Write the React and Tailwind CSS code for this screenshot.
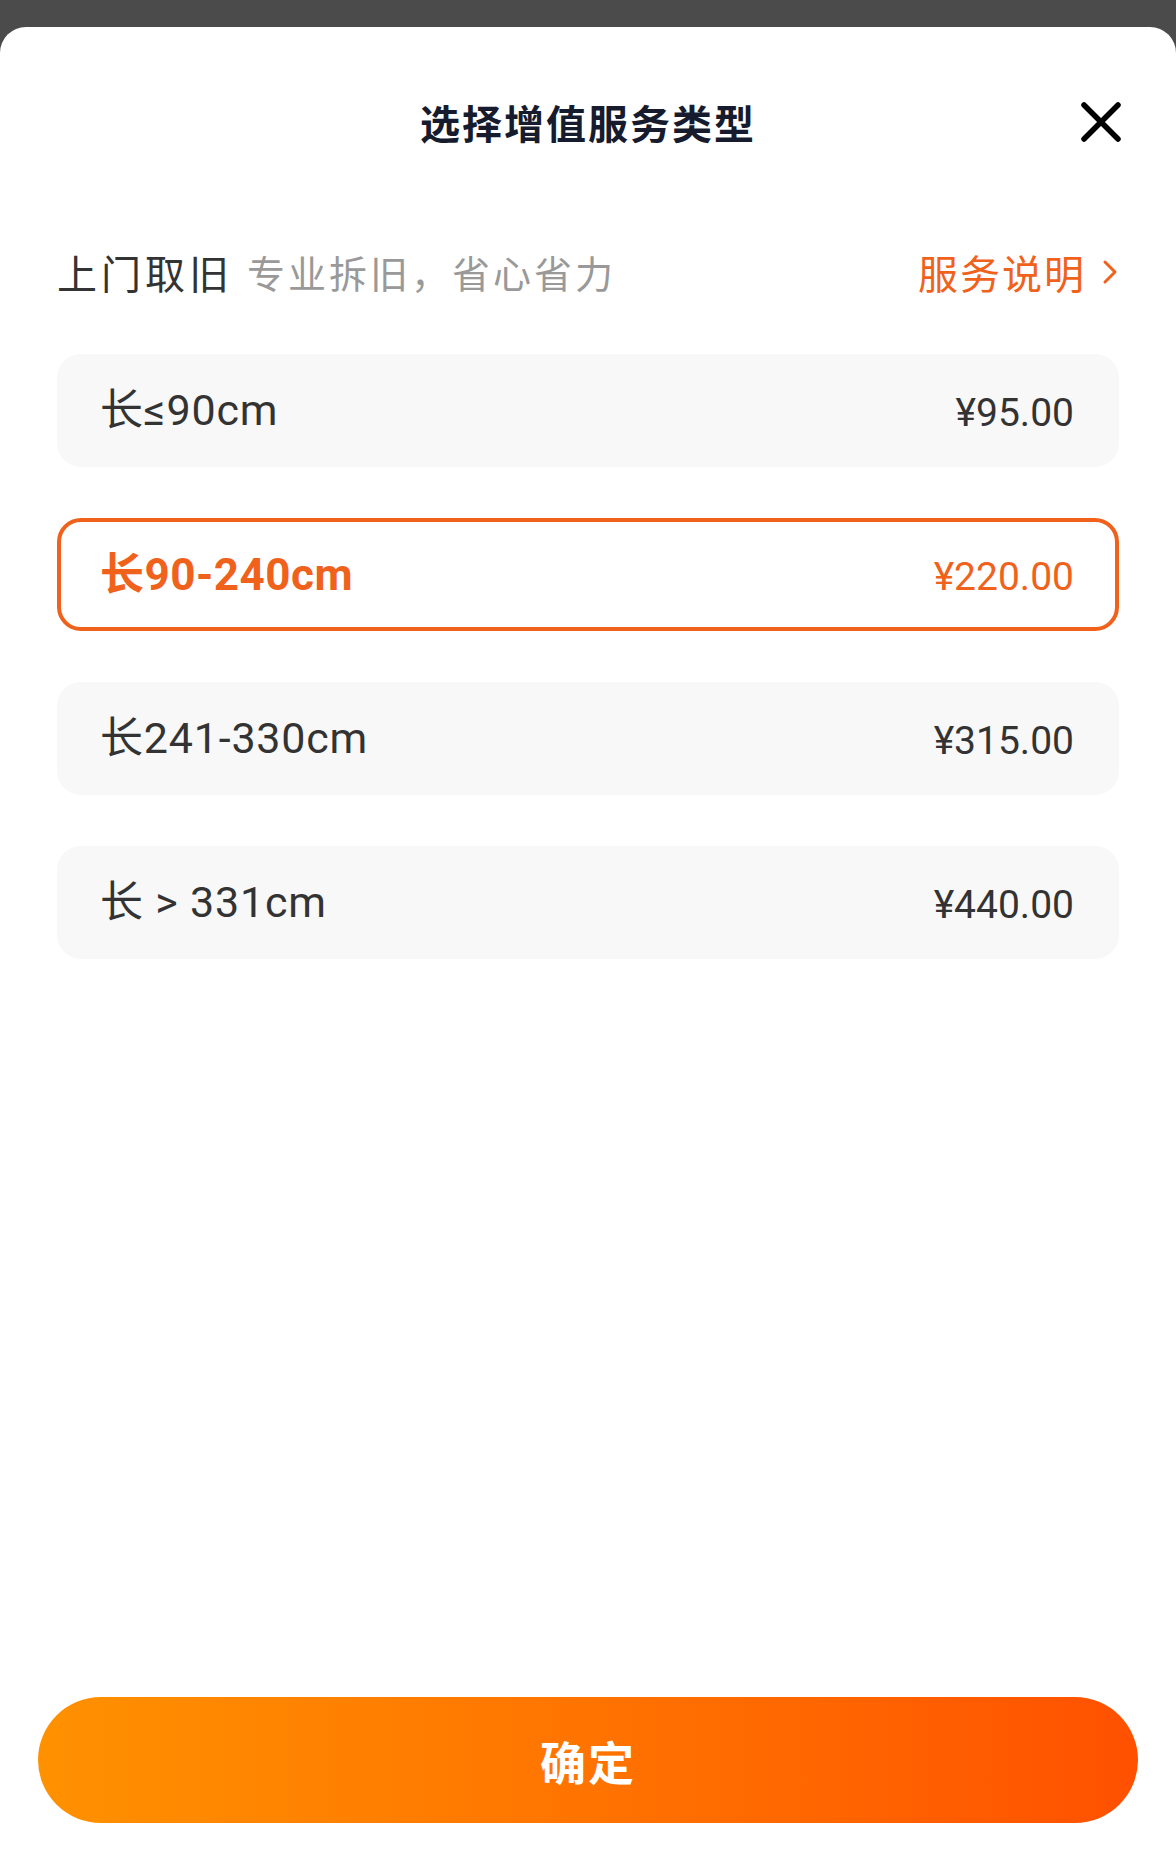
const options = [
    { id: 1, label: '长≤90cm', price: '¥95.00' },
    { id: 2, label: '长90-240cm', price: '¥220.00' },
    { id: 3, label: '长241-330cm', price: '¥315.00' },
    { id: 4, label: '长 > 331cm', price: '¥440.00' },
];

const cjk = "font-['Noto_Sans_CJK_SC',sans-serif]";
const num = "font-['Roboto','Noto_Sans_CJK_SC',sans-serif]";

export default function App() {
    const selected = 2;

    return (
        <div className="w-[1176px] h-[1868px] bg-[#4b4b4b] flex flex-col">
            <div className="h-[27px] shrink-0" />

            {/* 弹窗 */}
            <div className="flex-1 bg-white rounded-t-[26px] flex flex-col">
                {/* 标题 */}
                <div className="relative h-[190px] flex items-center justify-center shrink-0">
                    <h1 className={`${cjk} text-[40px] leading-none font-bold tracking-[2px] text-[#161c2d]`}>
                        选择增值服务类型
                    </h1>
                    <button type="button" className="absolute right-[54px] top-1/2 -translate-y-1/2 w-[42px] h-[42px] flex items-center justify-center">
                        <svg width="42" height="42" viewBox="0 0 42 42" fill="none">
                            <path d="M4 4 L38 38 M38 4 L4 38" stroke="#000" strokeWidth="5.5" strokeLinecap="round" />
                        </svg>
                    </button>
                </div>

                {/* 分类 */}
                <div className="mt-[27px] h-[56px] px-[57px] flex items-center justify-between">
                    <div className="flex items-center">
                        <span className={`${cjk} text-[40px] leading-none tracking-[4px] text-[#333333]`}>上门取旧</span>
                        <span className={`${cjk} ml-[14px] text-[38px] leading-none tracking-[3px] text-[#999999]`}>专业拆旧，省心省力</span>
                    </div>
                    <div className="flex items-center gap-[16px]">
                        <span className={`${cjk} text-[40px] leading-none tracking-[2px] text-[#f0621c]`}>服务说明</span>
                        <svg width="17" height="28" viewBox="0 0 17 28" fill="none">
                            <polyline points="3,4 13,14 3,24" stroke="#f0621c" strokeWidth="3" strokeLinecap="round" strokeLinejoin="round" />
                        </svg>
                    </div>
                </div>

                {/* 选项 */}
                <div className="mt-[54px] px-[57px] flex flex-col gap-[51px]">
                    {options.map((o) =>
                        o.id === selected ? (
                            <div key={o.id} className="h-[113px] rounded-[24px] border-[4px] border-[#f0621c] bg-white pl-[39px] pr-[41px] flex items-center justify-between">
                                <span className={`${num} text-[44px] leading-none font-bold tracking-[0.5px] text-[#f0621c]`}>{o.label}</span>
                                <span className={`${num} mt-[6px] text-[39px] leading-none text-[#f0621c]`}>{o.price}</span>
                            </div>
                        ) : (
                            <div key={o.id} className="h-[113px] rounded-[24px] bg-[#f8f8f8] pl-[43px] pr-[45px] flex items-center justify-between">
                                <span className={`${num} text-[43px] leading-none tracking-[0.8px] text-[#333333]`}>{o.label}</span>
                                <span className={`${num} mt-[6px] text-[39px] leading-none text-[#333333]`}>{o.price}</span>
                            </div>
                        )
                    )}
                </div>

                <div className="flex-1" />

                {/* 确定按钮 */}
                <div className="px-[38px] pb-[45px]">
                    <button type="button" className="w-full h-[126px] rounded-full bg-gradient-to-r from-[#ff9100] to-[#ff5000] flex items-center justify-center">
                        <span className={`${cjk} text-[46px] leading-none font-bold tracking-[2px] text-white`}>确定</span>
                    </button>
                </div>
            </div>
        </div>
    );
}
